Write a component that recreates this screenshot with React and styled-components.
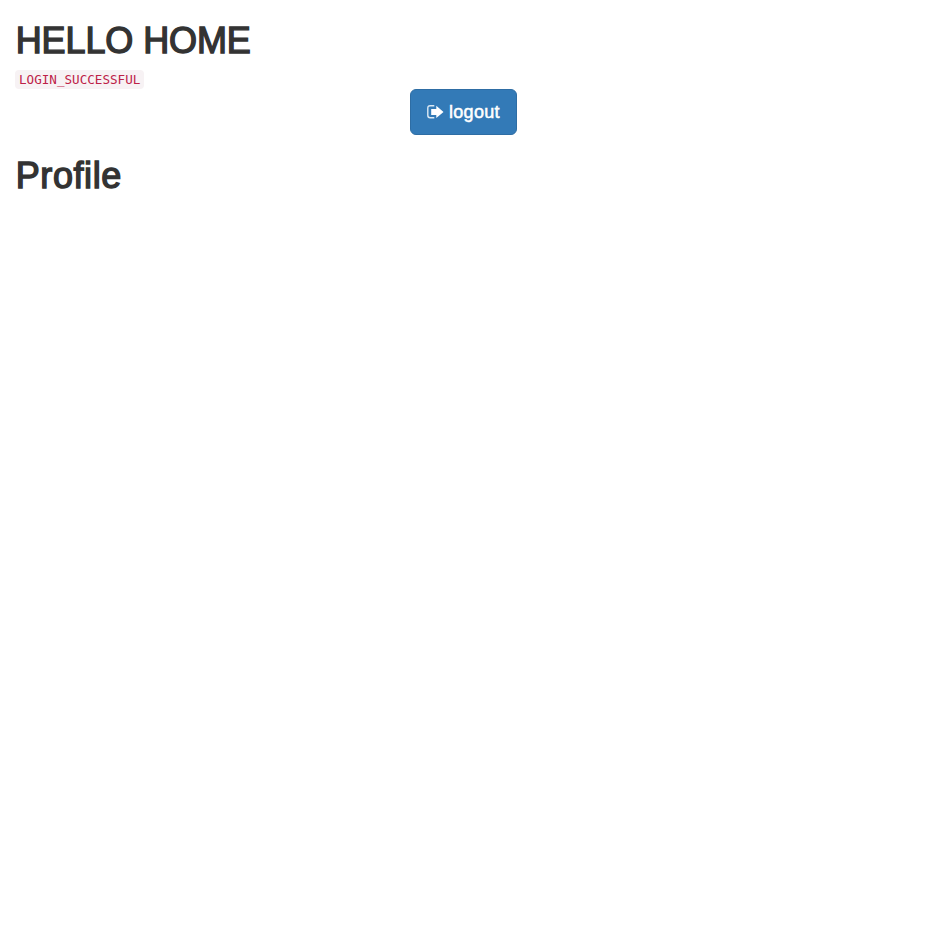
import React from 'react';
import styled, { createGlobalStyle } from 'styled-components';

const GlobalStyle = createGlobalStyle`
  *, *::before, *::after { box-sizing: border-box; }
  body {
    margin: 0;
    background: #fff;
    color: #333;
    font-family: "Liberation Sans", Arial, sans-serif;
    font-size: 14px;
    line-height: 20px;
  }
`;

const Page = styled.main`
  padding: 21px 15px 0;
`;

const Title = styled.h1`
  margin: 0;
  padding-left: 0.7px;
  width: max-content;
  font-size: 36px;
  font-weight: 400;
  line-height: 40px;
  -webkit-text-stroke: 1.4px #333;
  letter-spacing: ${(p) => p.$tracking || '0'};
`;

const StatusLine = styled.div`
  height: 19px;
  margin-top: 9px;
  display: flex;
`;

const Status = styled.code`
  height: 19px;
  padding: 0 4px;
  border-radius: 4px;
  background: #f7f2f4;
  color: #bd2147;
  font-family: "DejaVu Sans Mono", monospace;
  font-size: 12.6px;
  line-height: 19px;
`;

const Actions = styled.div`
  display: flex;
  justify-content: center;
  margin-bottom: 21px;
`;

const LogoutButton = styled.button`
  display: flex;
  align-items: center;
  gap: 5px;
  width: 107px;
  height: 46px;
  padding: 0 16px;
  border: 1px solid #2e6da4;
  border-radius: 6px;
  background: #337ab7;
  color: #fff;
  font: 400 18px/24px "Liberation Sans", Arial, sans-serif;
  letter-spacing: 0.3px;
  -webkit-text-stroke: 0.5px #fff;
`;

const Icon = styled.svg`
  flex: none;
  width: 17px;
  height: 16px;
`;

export default function App() {
  return (
    <>
      <GlobalStyle />
      <Page>
        <Title $tracking="-0.1px">HELLO HOME</Title>
        <StatusLine><Status>LOGIN_SUCCESSFUL</Status></StatusLine>
        <Actions>
          <LogoutButton type="button">
            <Icon viewBox="0 0 17 16" aria-hidden="true">
              <path d="M7.300 1.700H3.200Q.8 1.700.8 4.200v7.100q0 2.500 2.400 2.500h4.100" fill="none" stroke="#dce9f4" strokeWidth="1.400" />
              <path d="M9.300 1.800 16.500 7.900 9.300 14V10.900H4.200V5.100h5.100z" fill="#fff" />
            </Icon>
            <span>logout</span>
          </LogoutButton>
        </Actions>
        <Title $tracking="0.6px">Profile</Title>
      </Page>
    </>
  );
}
